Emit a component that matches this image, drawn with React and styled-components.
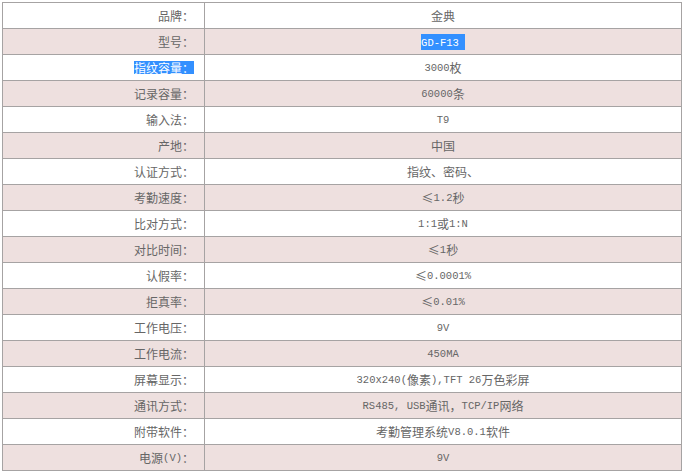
import React from "react";
import styled, { createGlobalStyle } from "styled-components";

const GlobalStyle = createGlobalStyle`
  body {
    margin: 2px;
    background: #fff;
    font-family: "Noto Sans CJK SC", "Liberation Sans", sans-serif;
  }
`;

const specs = [
  { label: "品牌：", value: "金典" },
  { label: "型号：", value: "GD-F13", pickValue: true },
  { label: "指纹容量：", value: "3000枚", pickLabel: true },
  { label: "记录容量：", value: "60000条" },
  { label: "输入法：", value: "T9" },
  { label: "产地：", value: "中国" },
  { label: "认证方式：", value: "指纹、密码、" },
  { label: "考勤速度：", value: "≤1.2秒" },
  { label: "比对方式：", value: "1:1或1:N" },
  { label: "对比时间：", value: "≤1秒" },
  { label: "认假率：", value: "≤0.0001%" },
  { label: "拒真率：", value: "≤0.01%" },
  { label: "工作电压：", value: "9V" },
  { label: "工作电流：", value: "450MA" },
  { label: "屏幕显示：", value: "320x240(像素),TFT 26万色彩屏" },
  { label: "通讯方式：", value: "RS485, USB通讯，TCP/IP网络" },
  { label: "附带软件：", value: "考勤管理系统V8.0.1软件" },
  { label: "电源(V)：", value: "9V" },
];

function Mixed({ text }) {
  // ascii runs get the narrow mono face, like the old SimSun page
  return text.split(/([\x20-\x7e]+)/).map((part, i) =>
    /^[\x20-\x7e]+$/.test(part) ? <Lat key={i}>{part}</Lat> : part
  );
}

function App() {
  return (
    <>
      <GlobalStyle />
      <Sheet>
        {specs.map((s, i) => (
          <Row key={s.label} $shaded={i % 2 === 1}>
            <Label>
              {s.pickLabel ? (
                <Picked>
                  <Mixed text={s.label} />
                </Picked>
              ) : (
                <Mixed text={s.label} />
              )}
            </Label>
            <Value>
              {s.pickValue ? (
                <Picked $tail>
                  <Mixed text={s.value} />
                </Picked>
              ) : (
                <Mixed text={s.value} />
              )}
            </Value>
          </Row>
        ))}
      </Sheet>
    </>
  );
}

const Sheet = styled.div`
  width: 679px;
  border-top: 1px solid #a6a3a3;
  border-left: 1px solid #a6a3a3;
`;

const Row = styled.div`
  display: grid;
  grid-template-columns: 202px 477px;
  background: ${(p) => (p.$shaded ? "#eee0df" : "#fff")};
`;

const Cell = styled.div`
  height: 25px;
  border-right: 1px solid #a6a3a3;
  border-bottom: 1px solid #a6a3a3;
  display: flex;
  align-items: center;
  font-size: 12px;
  color: #666;
  white-space: nowrap;
`;

const Label = styled(Cell)`
  justify-content: flex-end;
  padding-right: 10px;
`;

const Value = styled(Cell)`
  justify-content: center;
`;

const Lat = styled.span`
  font-family: "Liberation Mono", "DejaVu Sans Mono", monospace;
  font-size: 10.5px;
`;

const Picked = styled.span`
  background: #3390ff;
  color: #fff;
  line-height: 13px;
  padding-right: ${(p) => (p.$tail ? "6px" : "0")};
`;

export default App;
